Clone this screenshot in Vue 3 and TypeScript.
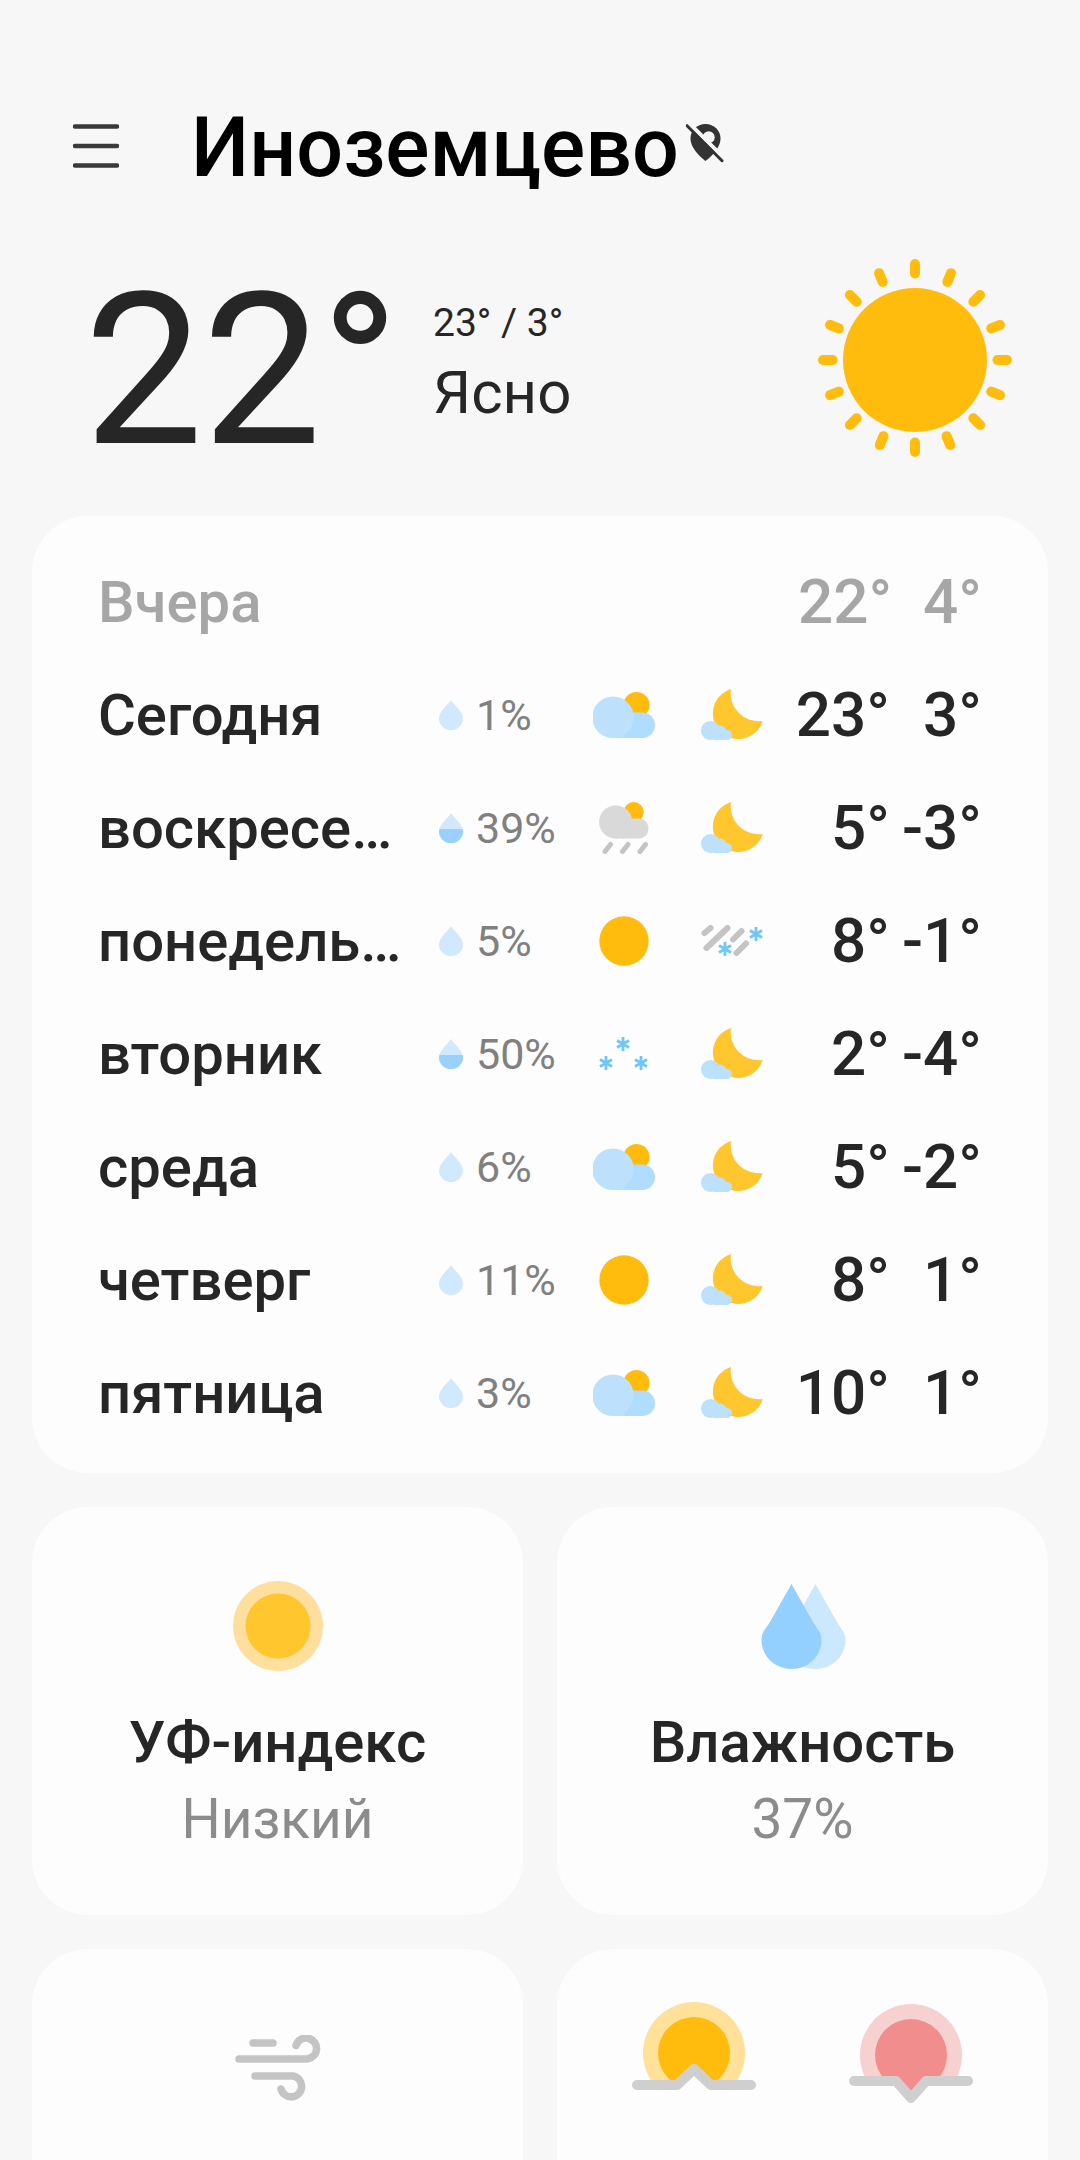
<template>
  <div class="page">
    <!-- icon sprites -->
    <svg class="sprites" width="0" height="0" aria-hidden="true">
      <defs>
        <symbol id="drop" viewBox="0 0 24 30">
          <path d="M12 0C14 4 24 11 24 18.5a12 11.5 0 0 1-24 0C0 11 10 4 12 0Z" fill="#d1e9ff" />
        </symbol>
        <symbol id="drop-half" viewBox="0 0 24 30">
          <path d="M12 0C14 4 24 11 24 18.5a12 11.5 0 0 1-24 0C0 11 10 4 12 0Z" fill="#d1e9ff" />
          <path d="M.5 16h23c.3.8.5 1.7.5 2.5a12 11.5 0 0 1-24 0c0-.8.2-1.7.5-2.5Z" fill="#99d0ff" />
        </symbol>
        <symbol id="partly" viewBox="0 0 62 46">
          <circle cx="43.5" cy="13" r="13" fill="#ffbc0d" />
          <rect x="20" y="20.5" width="42" height="25.5" rx="12.7" fill="#b0dcff" />
          <path d="M20 4.5a20.7 20.7 0 0 1 0 41.5A20.7 20.7 0 0 1 20 4.5Z" fill="#bde0fd" />
          <rect x="20" y="36" width="10" height="10" fill="#bde0fd" />
        </symbol>
        <symbol id="rain" viewBox="0 0 50 52">
          <circle cx="34.7" cy="10" r="10" fill="#ffbc0d" />
          <circle cx="16.7" cy="20" r="16.6" fill="#d9d9d9" />
          <rect x="16" y="16.5" width="33.5" height="20" rx="9.8" fill="#d9d9d9" />
          <path d="M16 30h10v6.5H16Z" fill="#d9d9d9" />
          <path d="M6 49.5l5.5-7M23.5 49.5l5.5-7M41 49.5l5.5-7" stroke="#c4c4c4" stroke-width="5" stroke-linecap="round" fill="none" />
        </symbol>
        <symbol id="sun" viewBox="0 0 50 50">
          <circle cx="25" cy="25" r="24.7" fill="#ffbc0d" />
        </symbol>
        <symbol id="flake" viewBox="-8 -8 16 16">
          <path d="M0-7V7M-6-3.5 6 3.5M-6 3.5 6-3.5" stroke="#6ec6fb" stroke-width="2.8" fill="none" />
        </symbol>
        <symbol id="snow" viewBox="0 0 50 33">
          <use href="#flake" x="16" y="-1" width="16" height="16" />
          <use href="#flake" x="-1" y="18" width="16" height="16" />
          <use href="#flake" x="34" y="18" width="16" height="16" />
        </symbol>
        <symbol id="sleet" viewBox="0 0 62 32">
          <path d="M3.5 8 9.5 3M5.5 23 26.5 3M32 14.5l8.5-8.5M35.5 28 45 18.5" stroke="#c4c4c4" stroke-width="6" stroke-linecap="round" fill="none" />
          <use href="#flake" x="16" y="16" width="16" height="16" />
          <use href="#flake" x="47" y="1" width="16" height="16" />
        </symbol>
        <symbol id="moon" viewBox="0 0 62 51">
          <path d="M30 0A25.5 25.5 0 1 0 61.7 32 A28 28 0 0 1 30 0Z" fill="#ffc62e" />
          <circle cx="9.5" cy="41.5" r="9.5" fill="#bde0fd" />
          <circle cx="19" cy="43" r="6.5" fill="#bde0fd" />
          <rect x="9" y="41" width="22" height="10" rx="5" fill="#bde0fd" />
        </symbol>
      </defs>
    </svg>

    <header class="topbar">
      <svg class="menu" width="46" height="44" viewBox="0 0 46 44">
        <path d="M2 2.5H44M2 22H44M2 41.5H44" stroke="#3a3a3a" stroke-width="4.5" stroke-linecap="round" />
      </svg>
      <h1 class="city">Иноземцево</h1>
      <svg class="pin-off" width="38" height="40" viewBox="0 0 38 40">
        <path d="M19.5 0C28 0 34.5 6.5 34.5 14.5 34.5 23 27 31 19.5 37 12 31 4.5 23 4.5 14.5 4.5 6.5 11 0 19.5 0Z" fill="#333" />
        <circle cx="22.7" cy="13.3" r="6" fill="#f7f7f7" />
        <path d="M3.5-.5 38.5 34.5" stroke="#f7f7f7" stroke-width="4" />
        <path d="M1 1.7 36 36.7" stroke="#333" stroke-width="3" stroke-linecap="round" />
      </svg>
    </header>

    <section class="now">
      <div class="temp">22°</div>
      <div class="now-info">
        <div class="range">23° / 3°</div>
        <div class="cond">Ясно</div>
      </div>
      <svg class="big-sun" width="200" height="204" viewBox="-100 -102 200 204">
        <circle r="72" fill="#ffbc0d" />
        <rect
          v-for="r in rays"
          :key="r.angle"
          x="-5"
          :y="-97 - r.out"
          width="10"
          height="19.5"
          rx="5"
          fill="#ffbc0d"
          :transform="`rotate(${r.angle})`"
        />
      </svg>
    </section>

    <section class="card forecast">
      <div class="row row-past">
        <span class="day">Вчера</span>
        <span class="hi">22°</span>
        <span class="lo">4°</span>
      </div>
      <div v-for="d in days" :key="d.name" class="row">
        <span class="day">{{ d.name }}</span>
        <span class="rain-chance">
          <svg width="24" height="30"><use :href="d.pct >= 30 ? '#drop-half' : '#drop'" /></svg>
          <span class="pct">{{ d.pct }}%</span>
        </span>
        <span class="icon-cell"><svg :width="icons[d.dayIcon][0]" :height="icons[d.dayIcon][1]"><use :href="'#' + d.dayIcon" /></svg></span>
        <span class="icon-cell"><svg :width="icons[d.nightIcon][0]" :height="icons[d.nightIcon][1]"><use :href="'#' + d.nightIcon" /></svg></span>
        <span class="hi">{{ d.hi }}°</span>
        <span class="lo">{{ d.lo }}°</span>
      </div>
    </section>

    <section class="tiles">
      <div class="card tile">
        <svg width="90" height="90" viewBox="0 0 90 90">
          <circle cx="45" cy="45" r="45" fill="#ffdf9e" />
          <circle cx="45" cy="45" r="32.5" fill="#ffc62e" />
        </svg>
        <div class="tile-title">УФ-индекс</div>
        <div class="tile-value">Низкий</div>
      </div>
      <div class="card tile">
        <svg width="90" height="90" viewBox="0 0 90 90">
          <path d="M57.5 3 79 41c5 9 8.500 10 8.500 18 0 16-13 29-30 29s-30-13-30-29c0-8 3.500-10 8.500-18Z" fill="#cce8ff" />
          <path d="M33.500 3 55 41c5 9 8.500 10 8.500 18 0 16-13 29-30 29s-30-13-30-29c0-8 3.500-10 8.500-18Z" fill="#93cfff" />
        </svg>
        <div class="tile-title">Влажность</div>
        <div class="tile-value">37%</div>
      </div>
      <div class="card tile tile-wind">
        <svg width="86" height="66" viewBox="0 0 86 66" fill="none" stroke="#c4c4c4" stroke-width="7.5" stroke-linecap="round">
          <path d="M18 8H38M4 24H71A10.5 10.5 0 1 0 61 10.5M20 41H58A10.5 10.5 0 1 1 46 54" />
        </svg>
      </div>
      <div class="card tile tile-sun">
        <svg width="124" height="90" viewBox="0 0 124 90">
          <clipPath id="rise-clip"><path d="M0 0H124V83H79L62 68 45 83H0Z" /></clipPath>
          <g clip-path="url(#rise-clip)">
            <circle cx="62" cy="51" r="51" fill="#ffe19a" />
            <circle cx="62" cy="51" r="36" fill="#ffbc0d" />
          </g>
          <path d="M5 83H45L62 67 79 83H119" fill="none" stroke="#cfcfcf" stroke-width="10" stroke-linecap="round" stroke-linejoin="round" />
        </svg>
        <svg width="124" height="104" viewBox="0 0 124 104">
          <clipPath id="set-clip"><path d="M0 0H124V79H77L62 95 47 79H0Z" /></clipPath>
          <g clip-path="url(#set-clip)">
            <circle cx="62" cy="53" r="51" fill="#f7d0d0" />
            <circle cx="62" cy="53" r="36" fill="#f18e8d" />
          </g>
          <path d="M5 79H47L62 96 77 79H119" fill="none" stroke="#cfcfcf" stroke-width="10" stroke-linecap="round" stroke-linejoin="round" />
        </svg>
      </div>
    </section>
  </div>
</template>

<script setup lang="ts">
type IconName = 'partly' | 'rain' | 'sun' | 'snow' | 'sleet' | 'moon'

interface Day {
  name: string
  pct: number
  dayIcon: IconName
  nightIcon: IconName
  hi: number
  lo: number
}

const icons: Record<IconName, [number, number]> = {
  partly: [62, 46],
  rain: [50, 52],
  sun: [50, 50],
  snow: [50, 33],
  sleet: [62, 32],
  moon: [62, 51],
}

// the upper rays of the sun sit a little further out than the others
const rays = Array.from({ length: 16 }, (_, i) => {
  const angle = i * 22.5
  const out = angle === 0 ? 4 : angle === 22.5 || angle === 337.5 ? 2 : 0
  return { angle, out }
})

const days: Day[] = [
  { name: 'Сегодня', pct: 1, dayIcon: 'partly', nightIcon: 'moon', hi: 23, lo: 3 },
  { name: 'воскресе…', pct: 39, dayIcon: 'rain', nightIcon: 'moon', hi: 5, lo: -3 },
  { name: 'понедель…', pct: 5, dayIcon: 'sun', nightIcon: 'sleet', hi: 8, lo: -1 },
  { name: 'вторник', pct: 50, dayIcon: 'snow', nightIcon: 'moon', hi: 2, lo: -4 },
  { name: 'среда', pct: 6, dayIcon: 'partly', nightIcon: 'moon', hi: 5, lo: -2 },
  { name: 'четверг', pct: 11, dayIcon: 'sun', nightIcon: 'moon', hi: 8, lo: 1 },
  { name: 'пятница', pct: 3, dayIcon: 'partly', nightIcon: 'moon', hi: 10, lo: 1 },
]
</script>

<style>
body {
  background: #f7f7f7;
}
</style>

<style scoped>
.page {
  height: 2160px;
  overflow: hidden;
  padding: 0 32px;
  box-sizing: border-box;
  background: #f7f7f7;
  font-family: Roboto, "Noto Sans", sans-serif;
  color: #262626;
}

.sprites {
  display: block;
}

.topbar {
  display: flex;
  align-items: center;
  height: 80px;
  padding: 106px 0 0 41px;
}

.menu {
  flex-shrink: 0;
  margin-right: 72px;
}

.city {
  margin: 4px 0 0;
  font-size: 82.5px;
  font-weight: 500;
  line-height: 80px;
  color: #000;
}

.pin-off {
  margin: -4px 0 0 7px;
}

.now {
  display: flex;
  align-items: center;
  height: 230px;
  margin-top: 68px;
  padding-left: 52px;
}

.temp {
  width: 349px;
  font-size: 212px;
  line-height: 230px;
  letter-spacing: -1px;
  margin-top: 4px;
}

.now-info {
  flex: 1;
  margin-top: -12px;
}

.range {
  font-size: 39px;
  line-height: 46px;
}

.cond {
  margin-top: 13px;
  font-size: 60px;
  line-height: 68px;
}

.big-sun {
  margin: -18px 33px 0 0;
}

.card {
  background: #fdfdfd;
  border-radius: 56px;
}

.forecast {
  margin-top: 32px;
  padding: 29px 66px 24px 66px;
}

.row {
  display: grid;
  grid-template-columns: 341px 133px 103px 113px 1fr 92px;
  align-items: center;
  height: 113px;
  font-size: 58px;
  font-weight: 500;
}

.row-past {
  color: #a6a6a6;
  grid-template-columns: 1fr 92px 92px;
  height: 113px;
}

.rain-chance {
  display: flex;
  align-items: center;
  gap: 13px;
}

.pct {
  font-size: 43px;
  font-weight: 400;
  color: #808080;
}

.icon-cell {
  display: flex;
  justify-content: center;
}

.icon-cell svg {
  display: block;
}

.day {
  white-space: nowrap;
}

.hi,
.lo {
  text-align: right;
  font-weight: 500;
  font-size: 62px;
}

.lo {
  margin-left: 0;
}

.tiles {
  display: grid;
  grid-template-columns: 1fr 1fr;
  gap: 34px;
  margin-top: 34px;
}

.tile {
  display: flex;
  flex-direction: column;
  align-items: center;
  height: 408px;
  padding-top: 74px;
  box-sizing: border-box;
}

.tile svg {
  display: block;
}

.tile-title {
  margin-top: 35px;
  font-size: 58px;
  font-weight: 500;
  line-height: 72px;
}

.tile-value {
  margin-top: 6px;
  font-size: 55px;
  line-height: 70px;
  color: #8c8c8c;
}

.tile-wind {
  padding-top: 86px;
}

.tile-sun {
  flex-direction: row;
  align-items: flex-start;
  justify-content: center;
  gap: 93px;
  padding-top: 53px;
}
</style>
